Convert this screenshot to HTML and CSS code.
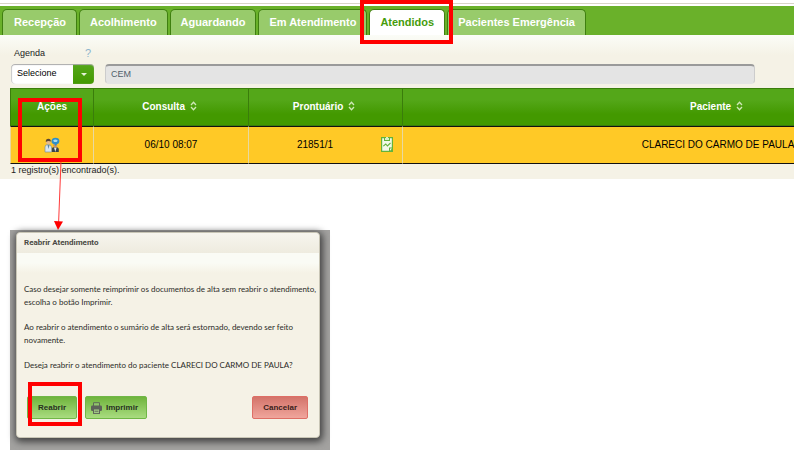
FILE: index.html
```
<!DOCTYPE html>
<html lang="pt-BR">
<head>
    <meta charset="UTF-8">
    <meta name="viewport" content="width=device-width, initial-scale=1.0">
    <title>Atendidos</title>
    <link rel="stylesheet" href="styles.css">
</head>
<body>
    <header>
        <nav class="tabs">
            <a href="#recepcao">Recepção</a>
            <a href="#acolhimento">Acolhimento</a>
            <a href="#aguardando">Aguardando</a>
            <a href="#em-atendimento">Em Atendimento</a>
            <a href="#atendidos" class="active">Atendidos<span class="mark mark-tab"></span></a>
            <a href="#emergencia">Pacientes Emergência</a>
        </nav>
    </header>

    <main class="panel">
        <form class="filters">
            <div class="label-row">
                <label for="agenda">Agenda</label>
                <a href="#ajuda" class="help">?</a>
            </div>
            <div class="fields">
                <div class="select-box">
                    <select id="agenda">
                        <option>Selecione</option>
                    </select>
                </div>
                <input type="text" id="descricao" aria-label="Descrição da agenda" value="CEM" readonly>
            </div>
        </form>

        <div class="table-box">
            <table>
                <colgroup>
                    <col class="col-acoes">
                    <col class="col-consulta">
                    <col class="col-prontuario">
                    <col class="col-paciente">
                </colgroup>
                <thead>
                    <tr>
                        <th>Ações</th>
                        <th>Consulta <svg class="sort" viewBox="0 0 7 10"><path d="M1 4 L3.5 1.3 L6 4 M1 6 L3.5 8.7 L6 6"/></svg></th>
                        <th>Prontuário <svg class="sort" viewBox="0 0 7 10"><path d="M1 4 L3.5 1.3 L6 4 M1 6 L3.5 8.7 L6 6"/></svg></th>
                        <th>Paciente <svg class="sort" viewBox="0 0 7 10"><path d="M1 4 L3.5 1.3 L6 4 M1 6 L3.5 8.7 L6 6"/></svg></th>
                    </tr>
                </thead>
                <tbody>
                    <tr>
                        <td>
                            <button type="button" class="icon-button" aria-label="Reabrir atendimento">
                                <svg width="16" height="16" viewBox="0 0 16 16">
                                    <path d="M1 15 V10 Q1 7.5 4 7.5 Q7 7.5 7.5 10 V15 Z" fill="#d9e6ee" stroke="#7d8f98" stroke-width="0.7"/>
                                    <path d="M3.5 8 L4.5 12 L5.5 8 Z" fill="#5c87a8"/>
                                    <circle cx="4.3" cy="5" r="2.3" fill="#e5b98c"/>
                                    <path d="M1.8 5 Q1.6 1.8 4.4 1.8 Q7 1.8 6.8 4.6 Q4.5 3 1.8 5 Z" fill="#5b4632"/>
                                    <path d="M8 15 V11.5 Q8 10 11 10 Q14.5 10 14.8 12 V15 Z" fill="#39434a"/>
                                    <path d="M10 10.5 L11.3 15 L12.6 10.5 Z" fill="#e8eef0"/>
                                    <circle cx="11.2" cy="8.6" r="2" fill="#c99567"/>
                                    <path d="M7.5 3.7 Q8 0.8 11.4 0.8 Q15.4 0.8 15.4 4.2 Q15.4 6.5 13 7.2 L11.4 9 L11 7.4 Q7.2 7 7.5 3.7 Z" fill="#2f8fc8"/>
                                    <path d="M9.2 3.3 Q11.3 1.6 13.6 3.3 L13 4.7 Q11.3 5.4 9.8 4.7 Z" fill="#a8dcf2"/>
                                </svg>
                            </button>
                        </td>
                        <td>06/10 08:07</td>
                        <td>
                            <div class="record">
                                <span>21851/1</span>
                                <button type="button" class="icon-button" aria-label="Abrir prontuário">
                                    <svg width="12" height="15" viewBox="0 0 12 15">
                                        <rect width="12" height="15" fill="#63b33b"/>
                                        <path d="M1.2 1.2 H3 V4 H9 V1.2 H10.8 V10.6 H8 V13.8 H1.2 Z" fill="#f2fae9"/>
                                        <path d="M4 1 H5 V0 H7 V1 H8 V3 H4 Z" fill="#d8efc8"/>
                                        <path d="M2.3 9.2 L4.8 7 L6.4 9 L9.5 6" fill="none" stroke="#63b33b" stroke-width="1.1"/>
                                        <path d="M9 11.6 H11 L9 13.8 Z" fill="#f2fae9"/>
                                    </svg>
                                </button>
                            </div>
                        </td>
                        <td>CLARECI DO CARMO DE PAULA</td>
                    </tr>
                </tbody>
            </table>
            <span class="mark mark-actions"></span>
        </div>
        <p class="count">1 registro(s) encontrado(s).</p>
        <svg class="arrow" width="12" height="70" viewBox="0 0 12 70">
            <path d="M8 0 L5.5 64" stroke="#ff3a3a" fill="none"/>
            <path d="M1 60 L10 60.5 L5 69 Z" fill="#ff0000"/>
        </svg>
    </main>

    <section class="backdrop">
        <div class="dialog" role="dialog" aria-labelledby="dialog-title">
            <h2 id="dialog-title">Reabrir Atendimento</h2>
            <div class="dialog-body">
                <p>Caso desejar somente reimprimir os documentos de alta sem reabrir o atendimento,<br>escolha o botão Imprimir.</p>
                <p>Ao reabrir o atendimento o sumário de alta será estornado, devendo ser feito<br>novamente.</p>
                <p>Deseja reabrir o atendimento do paciente CLARECI DO CARMO DE PAULA?</p>
                <div class="buttons">
                    <button type="button" class="green marked">Reabrir<span class="mark mark-reopen"></span></button>
                    <button type="button" class="green print">
                        <svg width="11" height="12" viewBox="0 0 11 12">
                            <path d="M2.5 4 V0.7 H8.5 V4" fill="#8fc56b" stroke="#5d6b55"/>
                            <rect x="0" y="3.5" width="11" height="5.5" rx="1.2" fill="#5d6259"/>
                            <rect x="2.5" y="7" width="6" height="4.4" fill="#a8d488" stroke="#5d6259"/>
                            <path d="M3.5 9.2 H7.5" stroke="#5d6259"/>
                        </svg>
                        Imprimir
                    </button>
                    <button type="button" class="red">Cancelar</button>
                </div>
            </div>
        </div>
    </section>
</body>
</html>
```

FILE: styles.css
```
* {
    box-sizing: border-box;
}
body {
    margin: 0;
    font-family: 'Liberation Sans', Arial, sans-serif;
    font-size: 9px;
    color: #222;
    background-color: #fff;
}
header {
    padding-top: 3px;
}
.tabs {
    display: flex;
    gap: 2px;
    height: 32px;
    padding: 5px 2px 0;
    border-top: 1px solid #d8d5c8;
    background: #6ab12a;
    box-shadow: inset 0 2px 0 #fff;
}
.tabs a {
    position: relative;
    padding: 0 10px 0 11px;
    border: 1px solid #3f7f10;
    border-bottom: none;
    border-radius: 5px 5px 0 0;
    background-color: #98cb6b;
    color: #fff;
    font-size: 11px;
    font-weight: bold;
    line-height: 24px;
    text-decoration: none;
    white-space: nowrap;
}
.tabs a + a {
    padding: 0 10px;
}
.tabs a.active {
    background-color: #fff;
    color: #469c0c;
}

/* red call-outs */
.mark {
    position: absolute;
    border: 4px solid #ff0000;
    pointer-events: none;
    z-index: 2;
}
.mark-tab {
    inset: -10px -9px -9px -10px;
}
.mark-actions {
    top: 10px;
    left: 8px;
    width: 64px;
    height: 64px;
}
.mark-reopen {
    inset: -15px -6px -8px 0;
}

.panel {
    position: relative;
    padding: 11px 0 2px 10px;
    background: linear-gradient(#fbfcf7, #f5f2e6 20px);
}
.label-row {
    display: flex;
    justify-content: space-between;
    width: 84px;
    padding: 0 3px 0 4px;
    line-height: 14px;
}
.help {
    color: #8db4cc;
    font-size: 11px;
    text-decoration: none;
}
.fields {
    display: flex;
    gap: 11px;
    margin: 4px 39px 4px 1px;
}
.select-box {
    position: relative;
    width: 83px;
    height: 20px;
}
.select-box select {
    width: 100%;
    height: 100%;
    padding: 0 22px 2px 6px;
    border: none;
    border-radius: 4px;
    appearance: none;
    background: linear-gradient(to right, #fff 62px, transparent 62px), linear-gradient(#55a71b, #439900);
    box-shadow: inset 0 1px 1px #aaa, inset 1px 0 1px #ccc;
    color: #000;
    font-family: inherit;
    font-size: 9px;
}
.select-box::after {
    content: "";
    position: absolute;
    top: 9px;
    right: 7px;
    border: 3px solid transparent;
    border-top-color: #e4f2d8;
    pointer-events: none;
}
.fields input {
    flex: 1;
    min-width: 0;
    height: 20px;
    padding: 0 5px 2px;
    border: 1px solid #ccc;
    border-top: 2px solid #9a9a9a;
    border-bottom-color: #e4e4e4;
    border-radius: 4px;
    background-color: #e4e4e4;
    color: #50606c;
    font-family: inherit;
    font-size: 9px;
}

.table-box {
    position: relative;
    overflow: hidden;
}
table {
    width: 1024px;
    table-layout: fixed;
    border-collapse: separate;
    border-spacing: 0;
    font-size: 10px;
    text-align: center;
}
.col-acoes {
    width: 84px;
}
.col-consulta {
    width: 155px;
}
.col-prontuario {
    width: 154px;
}
th {
    height: 38px;
    padding: 0 3px 2px 0;
    border-top: 1px solid #3a7d0b;
    border-right: 1px solid #3a7d0b;
    border-bottom: 1px solid #3a7d0b;
    background: linear-gradient(#54a719 30%, #439900 70%);
    color: #fff;
}
td {
    height: 38px;
    padding: 0 0 1px;
    border-top: 1px solid #111;
    border-right: 1px solid #e8d9a0;
    border-bottom: 1px solid #111;
    background-color: #ffc926;
    color: #000;
}
th:first-child {
    padding-right: 0;
    border-left: 1px solid #3a7d0b;
}
td:first-child {
    border-left: 1px solid #e8d9a0;
}
.sort {
    width: 7px;
    height: 10px;
    margin-left: 2px;
    fill: none;
    stroke: #cfe8b8;
    stroke-width: 1.3;
    vertical-align: -1px;
}
.icon-button {
    display: inline-block;
    padding: 0;
    border: none;
    background: none;
    cursor: pointer;
    vertical-align: middle;
}
.icon-button svg {
    display: block;
}
.record {
    display: flex;
    align-items: center;
    padding-right: 9px;
}
.record span {
    flex: 1;
}
.count {
    margin: 0;
    padding-left: 1px;
    line-height: 13px;
}
.arrow {
    position: absolute;
    top: 126px;
    left: 53px;
}

.backdrop {
    width: 320px;
    margin: 51px 0 0 10px;
    padding: 2px 10px 13px 6px;
    background-color: #a3a2a0;
}
.dialog {
    border: 1px solid #c9c6b6;
    border-radius: 4px;
    background-color: #f5f2e6;
    box-shadow: 1px 2px 7px 2px #444;
    color: #3c3c36;
    font-size: 8px;
}
.dialog h2 {
    margin: 0;
    padding: 0 7px;
    border-radius: 4px 4px 0 0;
    background: linear-gradient(#f7f5ee, #eeebdf);
    color: #4a4a44;
    font-family: Roboto, Arial, sans-serif;
    font-size: 8px;
    line-height: 20px;
}
.dialog-body {
    padding: 30px 11px 18px 7px;
    background: linear-gradient(#fafbf5 10px, #f5f2e6 20px);
    border-radius: 0 0 4px 4px;
}
.dialog-body p {
    margin: 0 0 12px;
    color: #2c2c28;
    font-family: Lato, Arial, sans-serif;
    line-height: 13px;
    white-space: nowrap;
}
.buttons {
    display: flex;
    gap: 8px;
    margin: 24px 0 0 3px;
}
.buttons button {
    height: 23px;
    padding: 0 10px;
    border: 1px solid #70b746;
    border-radius: 2px;
    color: #26301e;
    font-family: inherit;
    font-size: 8px;
    font-weight: bold;
    cursor: pointer;
}
.buttons .green {
    background: linear-gradient(#6fb43c, #a9dc80);
}
.buttons .red {
    margin-left: auto;
    border-color: #de6f66;
    background: linear-gradient(#d3746a, #f0a59c);
    color: #3a1d1a;
}
.buttons .marked {
    position: relative;
}
.buttons .print {
    display: flex;
    align-items: center;
    gap: 4px;
    padding: 0 8px 0 5px;
}
```
